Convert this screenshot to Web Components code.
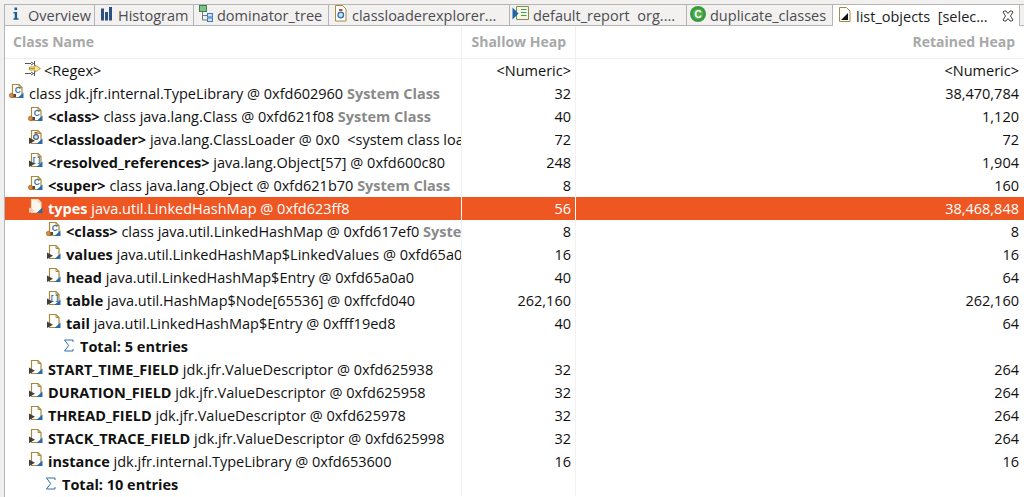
<!DOCTYPE html>
<html><head><meta charset="utf-8"><style>
html,body{margin:0;padding:0;background:#fff;overflow:hidden}
body{width:1024px;height:497px;font-family:"Open Sans","Noto Sans",sans-serif;font-size:14.5px;color:#111}
</style></head><body>
<mat-app></mat-app>
<script>
const ICONS={
info:`<svg width="16" height="16" viewBox="0 0 16 16"><rect x="6.500" y="1.500" width="2.600" height="2.600" fill="#1c5d96"/><path d="M5.500 6h3.600v6.200h1.400v1.500H5.500v-1.500h1.200V7.400H5.500z" fill="#1c5d96"/></svg>`,
hist:`<svg width="16" height="16" viewBox="0 0 16 16"><rect x="1" y="2.500" width="3" height="12" fill="#2b4f82"/><rect x="5" y="6" width="3" height="8.500" fill="#2b4f82"/><rect x="9" y="1" width="3" height="13.500" fill="#2b4f82"/></svg>`,
dom:`<svg width="18" height="17" viewBox="0 0 18 17"><rect x="1.500" y="0.500" width="7" height="6" fill="#7fc08a" stroke="#3f7d4e"/><path d="M4.500 7v8h4.500M4.500 10.500h4.500" fill="none" stroke="#777"/><rect x="9.500" y="8.500" width="5" height="3.500" fill="#cfe2f5" stroke="#3b7bc0"/><rect x="9.500" y="13" width="5" height="3.500" fill="#cfe2f5" stroke="#3b7bc0"/></svg>`,
loader:`<svg width="14" height="17" viewBox="0 0 14 17"><path d="M1.500 .5h7l3.500 3.500v12H1.500z" fill="#fff" stroke="#a88a3c"/><rect x="5" y="4" width="3.500" height="2" fill="#b05a30"/><circle cx="6.800" cy="10" r="2.800" fill="#cfe2f5" stroke="#2f6fa8" stroke-width="1.300"/></svg>`,
report:`<svg width="18" height="17" viewBox="0 0 18 17"><path d="M4.500 1.500h12v13h-12z" fill="#f1f6e6" stroke="#8a8a50"/><path d="M9 4.500h5.500M9 7.500h5.500M9 10.500h5.500" stroke="#4c9a58" stroke-width="1.200"/><path d="M.5 2.500l6 6-6 6z" fill="#1f66a8"/></svg>`,
dup:`<svg width="18" height="18" viewBox="0 0 18 18"><circle cx="9" cy="9" r="8" fill="#3d9a3f"/><circle cx="9" cy="9" r="6" fill="#4fae4f" stroke="#2f8a35" stroke-width=".6"/><text x="9" y="12.600" text-anchor="middle" font-family="Liberation Sans" font-weight="700" font-size="10" fill="#fff">C</text></svg>`,
list:`<svg width="14" height="17" viewBox="0 0 14 17"><path d="M1.500 1.500h7l3.500 3.500v10.500H1.500z" fill="#fff" stroke="#a88a3c"/><path d="M3 14l7-7v7z" fill="#111"/></svg>`,
close:`<svg width="12" height="12" viewBox="0 0 12 12"><path d="M2 1h2l2 2.500L8 1h2l1 1-2.500 4L11 10l-1 1H8L6 8.500 4 11H2l-1-1 2.500-4L1 2z" fill="#fff" stroke="#444"/></svg>`,
regex:`<svg width="17" height="16" viewBox="0 0 17 16"><path d="M0 2.500h6M0 12.500h6M9.500 0v5M9.500 10v5" stroke="#555" fill="none"/><path d="M6 1l2.500 1.500L6 4M6 11l2.500 1.500L6 14" fill="none" stroke="#555"/><path d="M4.500 6h5.500V4l5.500 3.500-5.500 3.500V9H4.500z" fill="#f8e8a8" stroke="#b8922c" stroke-width=".9"/><path d="M4 7.500h6" stroke="#b8922c" stroke-width=".9"/></svg>`,
sum:`<svg width="11" height="13" viewBox="0 0 11 13"><path d="M10 3V1H1.500l4.200 5.500L1.500 12H10v-2" fill="none" stroke="#2f6fa8" stroke-width="1"/></svg>`
};
function objIcon(kind,sel){
 const border=sel?'#e6dcc4':'#a88a3c', fill=sel?'#fbf6ec':'#fff';
 let inner='';
 if(kind==='c') inner=`<text x="8.700" y="9.800" text-anchor="middle" font-family="Liberation Sans" font-size="8.500" font-weight="700" fill="#3a6ea5">C</text>`;
 if(kind==='l') inner=`<rect x="6.500" y="3" width="3" height="1.800" fill="#b05a30"/><circle cx="8" cy="8" r="2.400" fill="#cfe2f5" stroke="#50627a" stroke-width="1.200"/>`;
 if(kind==='a') inner=`<text x="8.500" y="10" text-anchor="middle" font-family="Liberation Mono" font-size="8" font-weight="700" fill="#3a6ea5">[]</text>`;
 const left = kind==='c'
   ? `<path d="M2 11h5v3H2z" fill="#4a4a4a"/><circle cx="2.500" cy="12.500" r="2.200" fill="#d98a3c" stroke="#9a5a20" stroke-width=".6"/>`
   : sel ? `<path d="M1 9.500l6 2.800-6 2.700z" fill="#f8c8b4"/>` : `<path d="M1 8.500l6 3.300-6 3.200z" fill="#3f3f3f"/>`;
 return `<svg width="16" height="17" viewBox="0 0 16 17"><path d="M3.500 1.500h6.500l3 3v10h-9.500z" fill="${fill}" stroke="${border}" stroke-width="1.200"/><path d="M10 1.500v3h3" fill="none" stroke="${border}"/>${inner}<path d="M8.500 15l6-5.500V15z" fill="#2a6aa8"/>${left}</svg>`;
}
class MatTab extends HTMLElement{
 connectedCallback(){
  const w=this.getAttribute('w'),act=this.hasAttribute('active');
  const r=this.attachShadow({mode:'open'});
  r.innerHTML=`<style>:host{display:flex;box-sizing:border-box;width:${w}px;height:${act?21:20}px;align-items:center;gap:${this.getAttribute('gap')||4}px;padding:1px 0 0 ${this.getAttribute('pl')||6}px;white-space:nowrap;
  background:${act?'#fff':'#f2f1f0'};border-right:1px solid #b5b5b5;color:${act?'#222':'#4c4c52'};flex:none}
  svg{flex:none} .i{display:flex;flex:none}.x{margin-left:auto;margin-right:5px;display:flex}</style><span class="i"><slot name="icon"></slot></span><slot></slot><span class="x"><slot name="close"></slot></span>`;
 }
}
customElements.define('mat-tab',MatTab);
class MatRow extends HTMLElement{
 connectedCallback(){
  const r=this.attachShadow({mode:'open'});
  const sel=this.hasAttribute('selected');
  r.innerHTML=`<style>:host{display:grid;grid-template-columns:456px 114px 1fr;height:23px;align-items:center;box-sizing:border-box;background:${sel?'#ee5622':'transparent'};color:${sel?'#fff':'#111'};white-space:nowrap}
  .a{display:flex;align-items:center;overflow:hidden;height:23px;padding-left:${this.getAttribute('indent')||0}px;gap:2px;box-sizing:border-box}
  .n{text-align:right;padding-right:4px;height:23px;line-height:23px;border-left:1px solid ${sel?'#fff':'#f1f1f1'};box-sizing:border-box}
  .n.l{padding-right:5px}
  .i{display:flex;flex:none;width:${this.getAttribute('iw')||18}px}</style>
  <div class="a"><span class="i"><slot name="icon"></slot></span><span><slot></slot></span></div><div class="n"><slot name="s"></slot></div><div class="n l"><slot name="r"></slot></div>`;
 }
}
customElements.define('mat-row',MatRow);
const b=t=>`<b>${t}</b>`, g=t=>`<b style="color:#8a8a8a">${t}</b>`;
const rows=[
 {ind:20,iw:17,ic:ICONS.regex,t:'&lt;Regex&gt;',s:'&lt;Numeric&gt;',r:'&lt;Numeric&gt;'},
 {ind:4,ic:objIcon('c'),t:`class jdk.jfr.internal.TypeLibrary @ 0xfd602960 ${g('System Class')}`,s:'32',r:'38,470,784'},
 {ind:23,ic:objIcon('c'),t:`${b('&lt;class&gt;')} class java.lang.Class @ 0xfd621f08 ${g('System Class')}`,s:'40',r:'1,120'},
 {ind:23,ic:objIcon('l'),t:`${b('&lt;classloader&gt;')} java.lang.ClassLoader @ 0x0 &nbsp;<span>&lt;system class loader&gt;</span>`,s:'72',r:'72'},
 {ind:23,ic:objIcon('a'),t:`${b('&lt;resolved_references&gt;')} java.lang.Object[57] @ 0xfd600c80`,s:'248',r:'1,904'},
 {ind:23,ic:objIcon('c'),t:`${b('&lt;super&gt;')} class java.lang.Object @ 0xfd621b70 ${g('System Class')}`,s:'8',r:'160'},
 {ind:23,sel:1,ic:objIcon('o',true),t:`${b('types')} java.util.LinkedHashMap @ 0xfd623ff8`,s:'56',r:'38,468,848'},
 {ind:41,ic:objIcon('c'),t:`${b('&lt;class&gt;')} class java.util.LinkedHashMap @ 0xfd617ef0 ${g('System Class')}`,s:'8',r:'8'},
 {ind:41,ic:objIcon('o'),t:`${b('values')} java.util.LinkedHashMap$LinkedValues @ 0xfd65a098`,s:'16',r:'16'},
 {ind:41,ic:objIcon('o'),t:`${b('head')} java.util.LinkedHashMap$Entry @ 0xfd65a0a0`,s:'40',r:'64'},
 {ind:41,ic:objIcon('a'),t:`${b('table')} java.util.HashMap$Node[65536] @ 0xffcfd040`,s:'262,160',r:'262,160'},
 {ind:41,ic:objIcon('o'),t:`${b('tail')} java.util.LinkedHashMap$Entry @ 0xfff19ed8`,s:'40',r:'64'},
 {ind:58,ic:ICONS.sum,iw:15,t:b('Total: 5 entries'),s:'',r:''},
 {ind:23,ic:objIcon('o'),t:`${b('START_TIME_FIELD')} jdk.jfr.ValueDescriptor @ 0xfd625938`,s:'32',r:'264'},
 {ind:23,ic:objIcon('o'),t:`${b('DURATION_FIELD')} jdk.jfr.ValueDescriptor @ 0xfd625958`,s:'32',r:'264'},
 {ind:23,ic:objIcon('o'),t:`${b('THREAD_FIELD')} jdk.jfr.ValueDescriptor @ 0xfd625978`,s:'32',r:'264'},
 {ind:23,ic:objIcon('o'),t:`${b('STACK_TRACE_FIELD')} jdk.jfr.ValueDescriptor @ 0xfd625998`,s:'32',r:'264'},
 {ind:23,ic:objIcon('o'),t:`${b('instance')} jdk.jfr.internal.TypeLibrary @ 0xfd653600`,s:'16',r:'16'},
 {ind:40,ic:ICONS.sum,iw:15,t:b('Total: 10 entries'),s:'',r:''},
];
class MatApp extends HTMLElement{
 connectedCallback(){
  const r=this.attachShadow({mode:'open'});
  const tabs=[[90,ICONS.info,'Overview',4,3],[99,ICONS.hist,'Histogram',2,5],[135,ICONS.dom,'dominator_tree',1,4],[181,ICONS.loader,'classloaderexplorer...',4,5],[177,ICONS.report,'default_report &nbsp;org....',3,2],[146,ICONS.dup,'duplicate_classes',3,2]];
  r.innerHTML=`<style>:host{display:block;width:1024px;height:497px;overflow:hidden;box-sizing:border-box;padding-left:4px;background:#efefef}
  .panel{height:100%;border-left:1px solid #b5b5b5;background:#fff;display:flex;flex-direction:column}
  .top{height:4px;background:#f2f1f0;margin-left:-5px;flex:none}
  .tabs{display:flex;flex:none;height:20px;border-top:1px solid #b5b5b5;border-bottom:1px solid #b5b5b5;background:#f2f1f0}
  .head{display:grid;grid-template-columns:456px 114px 1fr;flex:none;height:33px;align-items:center;font-weight:700;font-size:14px;color:#a8a8a8;border-bottom:1px solid #f0f0f0;box-sizing:border-box}
  .head div{padding:0 9px 0 8px;height:32px;line-height:32px;box-sizing:border-box;white-space:nowrap}
  .head div+div{text-align:right;border-left:1px solid #f0f0f0}
  .rows{display:block}
  </style>
  <div class="panel"><div class="top"></div>
  <div class="tabs">${tabs.map(t=>`<mat-tab w="${t[0]}" gap="${t[3]}" pl="${t[4]}"><span slot="icon">${t[1]}</span>${t[2]}</mat-tab>`).join('')}
   <mat-tab active w="187" gap="4" pl="5"><span slot="icon">${ICONS.list}</span>list_objects &nbsp;[selec...<span slot="close">${ICONS.close}</span></mat-tab></div>
  <div class="head"><div>Class Name</div><div>Shallow Heap</div><div>Retained Heap</div></div>
  <div class="rows">${rows.map(o=>`<mat-row indent="${o.ind}" ${o.sel?'selected':''} ${o.iw?`iw="${o.iw}"`:''}><span slot="icon">${o.ic}</span>${o.t}<span slot="s">${o.s}</span><span slot="r">${o.r}</span></mat-row>`).join('')}</div></div>`;
 }
}
customElements.define('mat-app',MatApp);
</script></body></html>
